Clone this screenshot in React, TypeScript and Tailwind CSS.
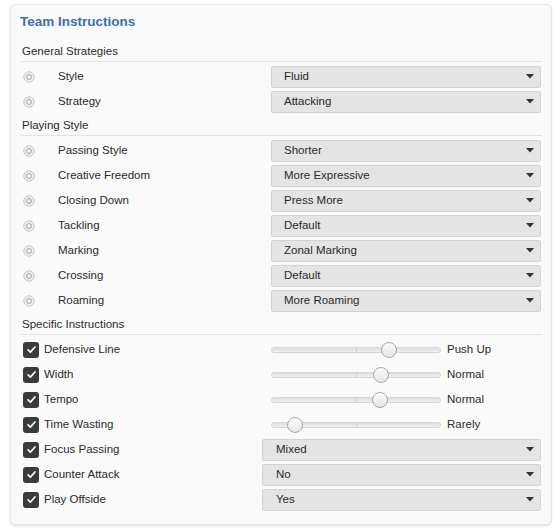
import React from 'react';

const generalRows = [
  { label: 'Style', value: 'Fluid' },
  { label: 'Strategy', value: 'Attacking' },
];

const playingRows = [
  { label: 'Passing Style', value: 'Shorter' },
  { label: 'Creative Freedom', value: 'More Expressive' },
  { label: 'Closing Down', value: 'Press More' },
  { label: 'Tackling', value: 'Default' },
  { label: 'Marking', value: 'Zonal Marking' },
  { label: 'Crossing', value: 'Default' },
  { label: 'Roaming', value: 'More Roaming' },
];

const sliderRows = [
  { label: 'Defensive Line', value: 'Push Up', pos: 118 },
  { label: 'Width', value: 'Normal', pos: 110 },
  { label: 'Tempo', value: 'Normal', pos: 109 },
  { label: 'Time Wasting', value: 'Rarely', pos: 24 },
];

const selectRows = [
  { label: 'Focus Passing', value: 'Mixed' },
  { label: 'Counter Attack', value: 'No' },
  { label: 'Play Offside', value: 'Yes' },
];

function Radio() {
  return (
    <svg width="12" height="12" viewBox="0 0 12 12" className="shrink-0">
      <circle cx="6" cy="6" r="5.2" fill="#efefef" stroke="#c4c4c4" strokeWidth="1" />
      <circle cx="6" cy="6" r="2.4" fill="#f8f8f8" stroke="#9c9c9c" strokeWidth="1" />
    </svg>
  );
}

function Check() {
  return (
    <div className="w-[16px] h-[16px] rounded-[3px] bg-[#3b3b3b] flex items-center justify-center shrink-0">
      <svg width="11" height="11" viewBox="0 0 12 12">
        <path d="M2.2 6.4 L4.8 8.9 L9.8 3.2" fill="none" stroke="#fff" strokeWidth="1.8" strokeLinecap="round" strokeLinejoin="round" />
      </svg>
    </div>
  );
}

function Select({ value, wide }: { value: string; wide?: boolean }) {
  return (
    <div
      className={`h-[22px] shrink-0 ${wide ? 'w-[279px] pl-[13px]' : 'w-[270px] pl-[12px]'} bg-[#e4e4e4] border border-[#d3d3d3] rounded-[2px] flex items-center justify-between pr-[6px] text-[#2a2a2a]`}
    >
      <span>{value}</span>
      <svg width="8" height="5" viewBox="0 0 8 5">
        <path d="M0 0 H8 L4 4.5 Z" fill="#333" />
      </svg>
    </div>
  );
}

function Slider({ pos }: { pos: number }) {
  return (
    <div className="relative w-[170px] h-[16px] flex items-center shrink-0">
      <div className="w-full h-[6px] rounded-full bg-gradient-to-b from-[#dedede] to-[#f0f0f0] border border-[#d6d6d6]" />
      <div className="absolute left-[85px] top-[5px] w-px h-[6px] bg-[#cfcfcf]" />
      <div
        className="absolute top-0 w-[16px] h-[16px] rounded-full border border-[#a8a8a8] bg-gradient-to-b from-[#fbfbfb] to-[#e6e6e6]"
        style={{ left: pos - 8 }}
      />
    </div>
  );
}

function Heading({ children }: { children: React.ReactNode }) {
  return (
    <div className="mt-[3px] leading-[16px] pb-[2px] pl-[2px] border-b border-[#e3e3e3] text-[#2a2a2a]">{children}</div>
  );
}

export default function App() {
  return (
    <div
      className="min-h-screen bg-white pt-[4px] pl-[10px] text-[11.5px]"
      style={{ fontFamily: '"Liberation Sans", Arial, sans-serif' }}
    >
      <div className="w-[542px] h-[521px] bg-[#fafafa] border border-[#e6e6e6] rounded-[5px] shadow-[0_1px_2px_rgba(0,0,0,0.12)] px-[9px] pt-[7px]">
        <div className="text-[13.5px] font-bold leading-[20px] text-[#3c6eb4]">Team Instructions</div>

        <div className="mt-[11px]">
          <Heading>General Strategies</Heading>
        </div>
        <div className="pt-[2px]">
          {generalRows.map((r) => (
            <div key={r.label} className="h-[25px] flex items-center">
              <div className="w-[251px] flex items-center pl-[3px]">
                <Radio />
                <span className="ml-[23px] text-[#2a2a2a]">{r.label}</span>
              </div>
              <Select value={r.value} />
            </div>
          ))}
        </div>

        <Heading>Playing Style</Heading>
        <div className="pt-[2px]">
          {playingRows.map((r) => (
            <div key={r.label} className="h-[25px] flex items-center">
              <div className="w-[251px] flex items-center pl-[3px]">
                <Radio />
                <span className="ml-[23px] text-[#2a2a2a]">{r.label}</span>
              </div>
              <Select value={r.value} />
            </div>
          ))}
        </div>

        <Heading>Specific Instructions</Heading>
        <div className="pt-[2px]">
          {sliderRows.map((r) => (
            <div key={r.label} className="h-[25px] flex items-center">
              <div className="w-[251px] flex items-center pl-[3px]">
                <Check />
                <span className="ml-[5px] text-[#2a2a2a]">{r.label}</span>
              </div>
              <Slider pos={r.pos} />
              <span className="ml-[6px] text-[#2a2a2a]">{r.value}</span>
            </div>
          ))}
          {selectRows.map((r) => (
            <div key={r.label} className="h-[25px] flex items-center">
              <div className="w-[242px] flex items-center pl-[3px]">
                <Check />
                <span className="ml-[5px] text-[#2a2a2a]">{r.label}</span>
              </div>
              <Select value={r.value} wide />
            </div>
          ))}
        </div>
      </div>
    </div>
  );
}
